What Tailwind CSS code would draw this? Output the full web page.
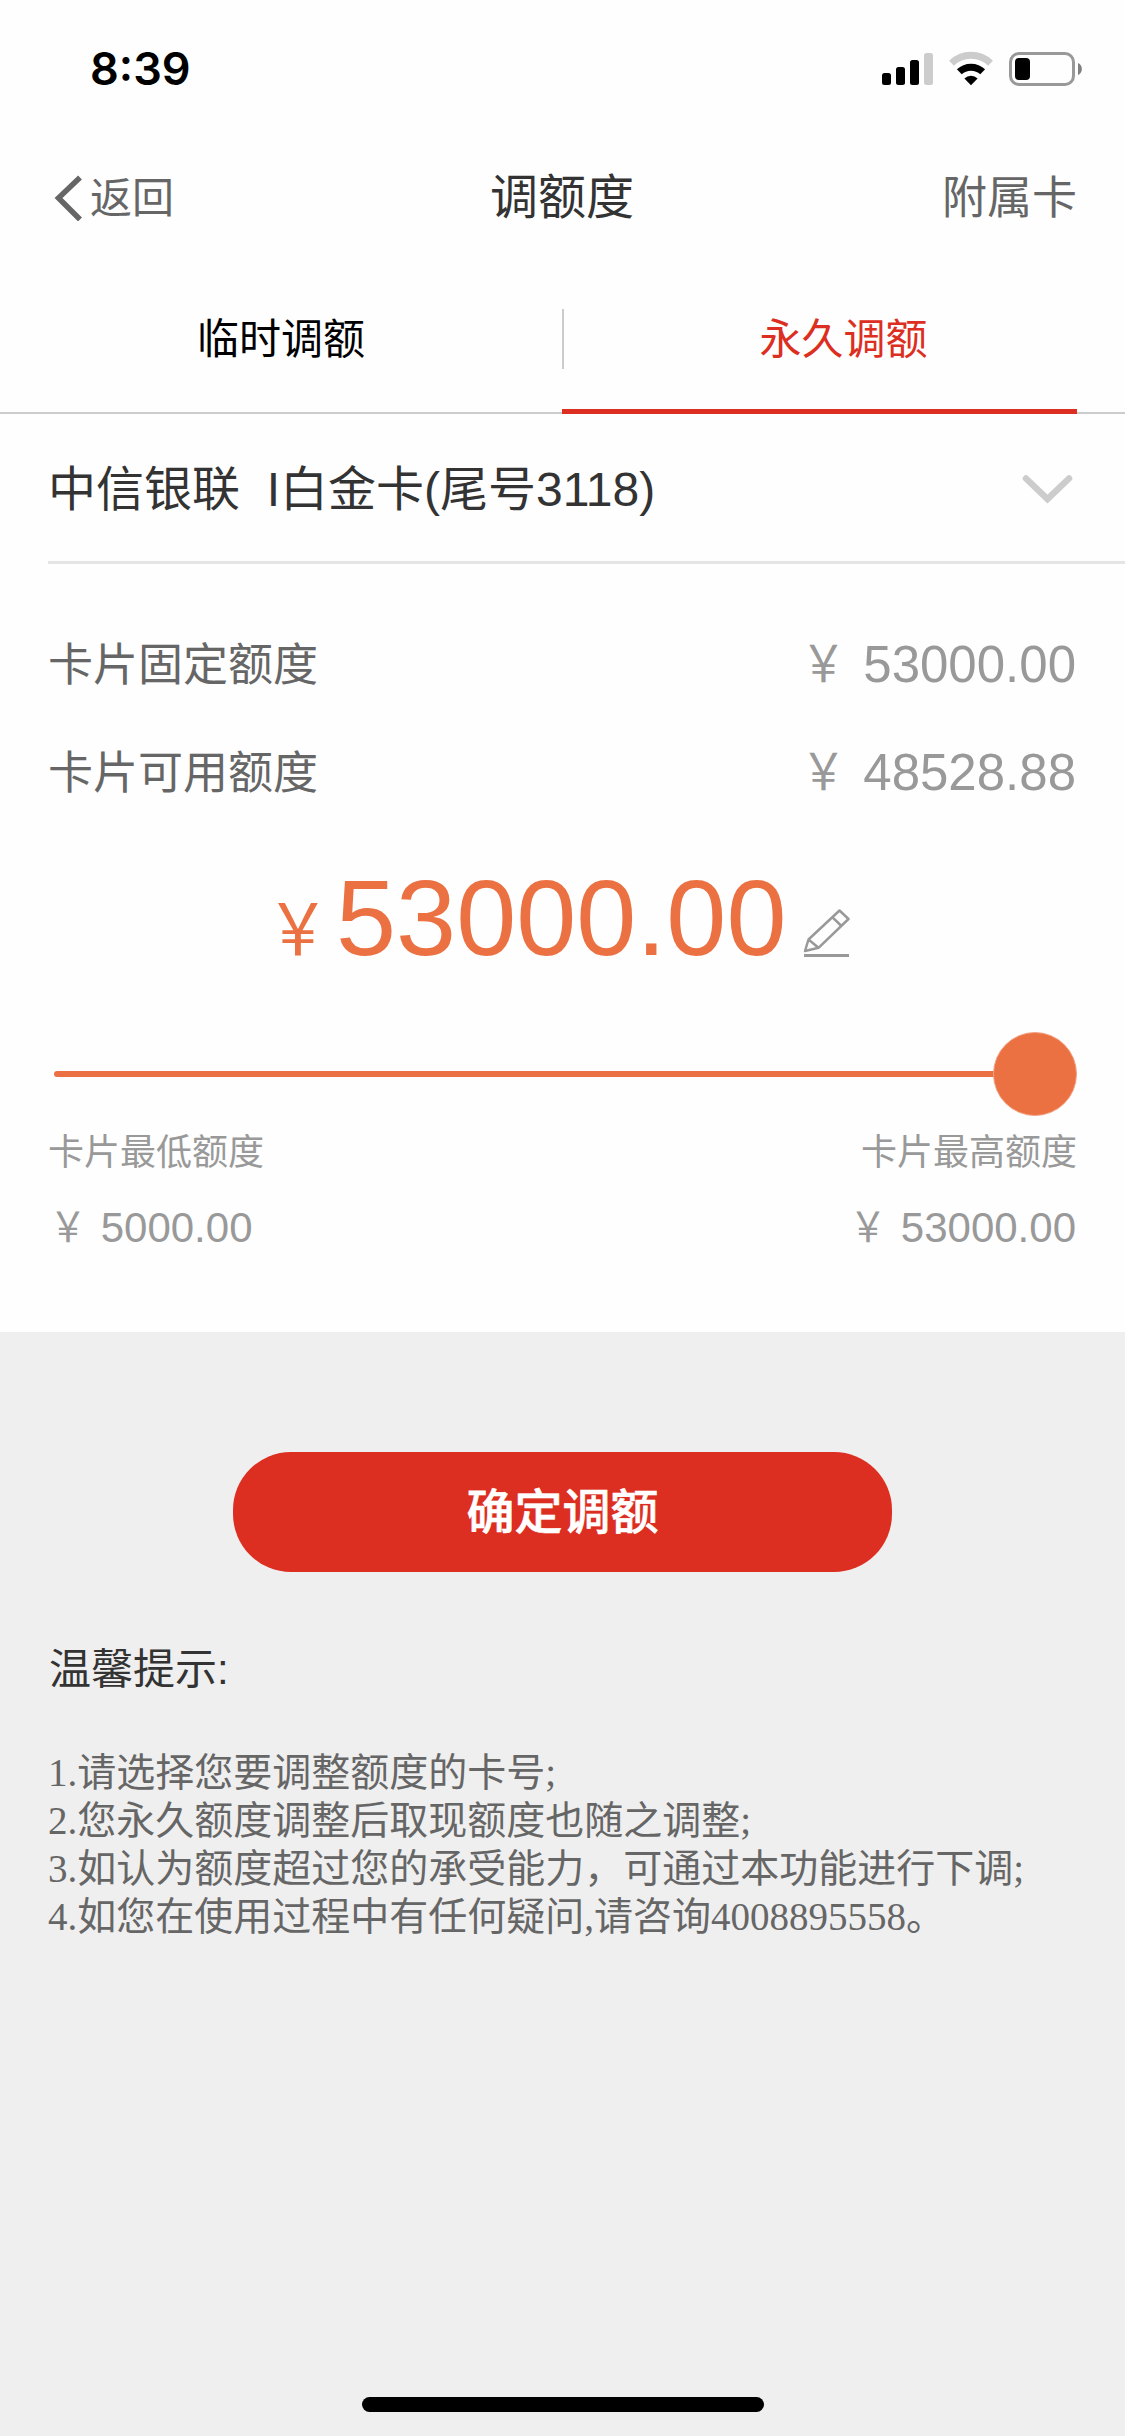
<!DOCTYPE html>
<html lang="zh-CN">
<head>
<meta charset="utf-8">
<title>调额度</title>
<script src="https://cdn.jsdelivr.net/npm/@tailwindcss/browser@4"></script>
</head>
<body class="bg-[#efefef]">
<div class="flex h-[2436px] w-[1125px] flex-col overflow-hidden bg-[#efefef] font-['Liberation_Sans','Noto_Sans_CJK_SC',sans-serif]">
  <div class="bg-[#fefefe]">
    <!-- Status bar -->
    <div class="flex h-[132px] justify-between pr-[42px] pl-[90px]">
      <div class="font-['Inter',sans-serif] text-[45px] leading-[138px] font-semibold text-black">8:39</div>
      <svg class="mt-[50px] h-[38px] w-[204px]" viewBox="0 0 204 38">
        <rect x="3" y="23" width="9" height="12" rx="2.5" fill="#000"/>
        <rect x="17" y="17" width="9" height="18" rx="2.5" fill="#000"/>
        <rect x="31" y="10" width="9" height="25" rx="2.5" fill="#000"/>
        <rect x="45" y="3" width="9" height="32" rx="2.5" fill="#ccc"/>
        <path d="M72.5 13.2A28 28 0 0 1 111.5 13.2" fill="none" stroke="#ccc" stroke-width="7"/>
        <path d="M80.3 21.8A17 17 0 0 1 103.7 21.8" fill="none" stroke="#000" stroke-width="7"/>
        <path d="M92 35.2L85.4 28.4A9.3 9.3 0 0 1 98.600 28.4Z" fill="#000"/>
        <rect x="131.500" y="3.500" width="63" height="31" rx="8.500" fill="none" stroke="#999" stroke-width="3"/>
        <rect x="136" y="8" width="15" height="22" rx="4" fill="#000"/>
        <path d="M199 13C204.200 15 204.200 23 199 25Z" fill="#808080"/>
      </svg>
    </div>
    <!-- Navigation bar -->
    <div class="grid h-[132px] grid-cols-3 pr-12 pl-[54px] leading-[132px] text-[#666]">
      <div class="flex text-[42px]">
        <svg class="mt-[43px] mr-[7px] h-[46px] w-[29px]" viewBox="0 0 29 46"><path d="M26 2.500L4.500 23L26 44.500" fill="none" stroke="#666" stroke-width="5.500"/></svg>
        <span class="pt-px">返回</span>
      </div>
      <h1 class="pr-[7px] text-center text-[48px] text-[#333]">调额度</h1>
      <div class="pt-px text-right text-[45px]">附属卡</div>
    </div>
    <!-- Tabs -->
    <div class="relative grid h-[150px] grid-cols-[562px_1fr] border-b-2 border-[#ccc] text-center text-[42px] leading-[152px]">
      <div class="text-black">临时调额</div>
      <div class="flex items-start">
        <div class="mt-[45px] h-[60px] w-[2px] bg-[#ccc]"></div>
        <div class="flex-1 pr-[2px] text-[#dc2e21]">永久调额</div>
      </div>
      <div class="absolute right-12 -bottom-[2px] h-[5px] w-[515px] bg-[#dc2e21]"></div>
    </div>
    <!-- Card selector -->
    <div class="ml-12 flex h-[150px] justify-between border-b-[3px] border-[#e5e5e5] pr-[50px] text-[48px] leading-[151px] text-[#333]">
      <div class="whitespace-pre">中信银联  I白金卡(尾号3118)</div>
      <svg class="mt-[59px] h-[32px] w-[55px]" viewBox="0 0 55 32"><path d="M6 5.500L27.500 26L49 5.500" fill="none" stroke="#ccc" stroke-width="6.500" stroke-linecap="round"/></svg>
    </div>
    <!-- Limits -->
    <div class="flex flex-col pt-12 pr-[49px] pl-12">
      <div class="flex h-[108px] items-start justify-between">
        <span class="text-[45px] leading-[108px] text-[#666]">卡片固定额度</span>
        <span class="text-[51px] leading-[106px] text-[#999]"><span class="inline-block scale-x-88">￥</span> 53000.00</span>
      </div>
      <div class="flex h-[108px] items-start justify-between">
        <span class="text-[45px] leading-[108px] text-[#666]">卡片可用额度</span>
        <span class="text-[51px] leading-[106px] text-[#999]"><span class="inline-block scale-x-88">￥</span> 48528.88</span>
      </div>
    </div>
    <!-- Chosen limit -->
    <div class="flex h-[144px] items-baseline pt-9 pl-[262px] text-[#eb7143]">
      <span class="mr-[2px] scale-x-88 text-[72px] leading-[72px]">￥</span>
      <span class="text-[108px] leading-[108px]">53000.00</span>
      <svg class="mt-[44px] ml-[17px] h-[50px] w-[47px] self-start" viewBox="0 0 47 50" fill="none" stroke="#999" stroke-width="2.500" stroke-linejoin="round">
        <path d="M2 43L5.500 31.500L36.500 2.500L45.500 11L15.500 39.800Z"/>
        <path d="M5.500 31.500L15.500 39.800M29.500 9.300L38.500 18"/>
        <path d="M1 47.500H46" stroke-width="3"/>
      </svg>
    </div>
    <!-- Slider -->
    <div class="mt-[60px] flex h-[84px] items-center pr-12 pl-[54px]">
      <div class="h-[6px] flex-1 rounded-l-full bg-[#eb7143]"></div>
      <div class="-ml-[2px] size-[84px] rounded-full border border-[#f2a283] bg-[#eb7143]"></div>
    </div>
    <div class="flex h-[216px] justify-between px-12 pt-[10px] text-[#999]">
      <div>
        <div class="text-[36px] leading-[53px]">卡片最低额度</div>
        <div class="mt-[17px] -ml-px text-[42px] leading-[63px]"><span class="inline-block scale-x-88">￥</span> 5000.00</div>
      </div>
      <div class="text-right">
        <div class="text-[36px] leading-[53px]">卡片最高额度</div>
        <div class="mt-[17px] pr-px text-[42px] leading-[63px]"><span class="inline-block scale-x-88">￥</span> 53000.00</div>
      </div>
    </div>
  </div>
  <!-- Confirm -->
  <button class="mx-auto mt-[120px] h-[120px] w-[659px] shrink-0 rounded-[58px] bg-[#dc2e21] text-center text-[48px] leading-[122px] font-medium text-white [-webkit-text-stroke:0.6px_white]">确定调额</button>
  <!-- Tips -->
  <div class="px-12">
    <h2 class="mt-[67px] pl-px text-[42px] leading-[61px] text-[#333]">温馨提示:</h2>
    <div class="mt-[49px] font-['Liberation_Serif','Noto_Sans_CJK_SC',serif] text-[39px] leading-[48px] whitespace-nowrap text-[#666]">
      <p>1.请选择您要调整额度的卡号;</p>
      <p>2.您永久额度调整后取现额度也随之调整;</p>
      <p>3.如认为额度超过您的承受能力，可通过本功能进行下调;</p>
      <p>4.如您在使用过程中有任何疑问,请咨询4008895558。</p>
    </div>
  </div>
  <div class="mx-auto mt-auto mb-6 h-[15px] w-[402px] rounded-full bg-black"></div>
</div>
</body>
</html>
